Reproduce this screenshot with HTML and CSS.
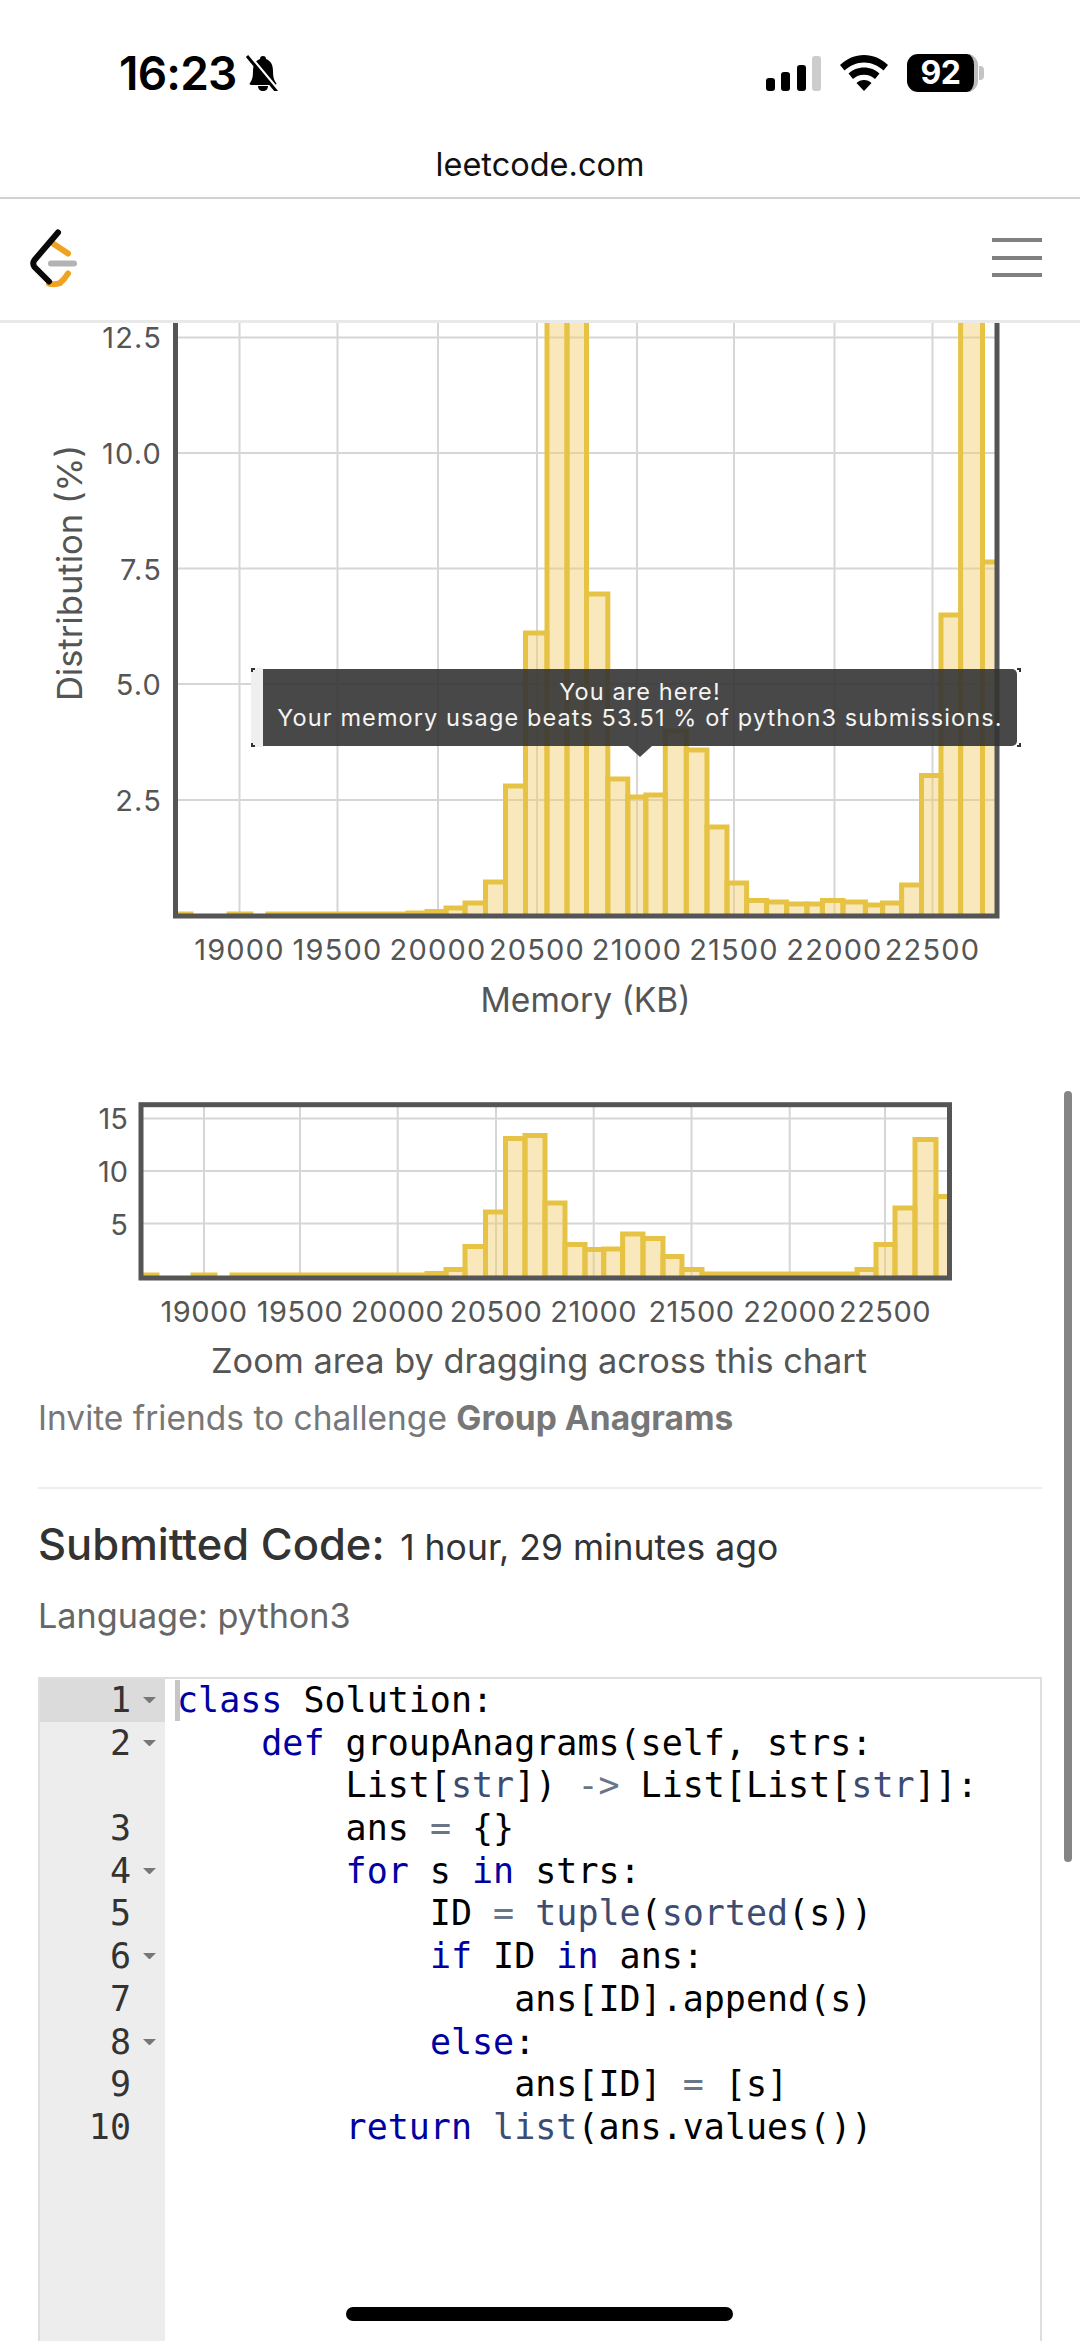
FILE: index.html
```html
<!DOCTYPE html>
<html lang="en">
<head>
<meta charset="utf-8">
<title>Group Anagrams submission</title>
<link rel="stylesheet" href="styles.css">
</head>
<body>
<div class="page">
  <header class="status">
    <div class="status-left">
      <span class="time">16:23</span>
      <svg class="bell" viewBox="0 0 36 36" width="36" height="36">
        <path class="solid" d="M18 1c2 0 3 1 3 3 5 2 7 6 7 12 0 6 1 9 3 12 1 1 0 2-1 2H6c-1 0-2-1-1-2 2-3 3-6 3-12 0-6 2-10 7-12 0-2 1-3 3-3z"/>
        <path class="solid" d="M13 31h10c0 3-2 5-5 5s-5-2-5-5z"/>
        <path class="slash-w" d="M4 0l30 36"/>
        <path class="slash" d="M2 1l30 36"/>
      </svg>
    </div>
    <div class="status-right">
      <div class="signal"><i class="b1"></i><i class="b2"></i><i class="b3"></i><i class="b4"></i></div>
      <svg class="wifi" viewBox="0 0 48 36" width="48" height="36">
        <path class="solid" d="M24 0c9 0 17 3.500 24 10l-4.500 5.500C38 10.500 31.500 7.500 24 7.500S10 10.500 4.500 15.500L0 10C7 3.500 15 0 24 0z"/>
        <path class="solid" d="M24 12.500c6 0 11.500 2.200 15.500 6l-4.500 5.500c-3-2.800-6.800-4.300-11-4.300s-8 1.500-11 4.300l-4.500-5.500c4-3.800 9.500-6 15.500-6z"/>
        <path class="solid" d="M24 25c3 0 5.500 1 7.500 3L24 36l-7.500-8c2-2 4.500-3 7.500-3z"/>
      </svg>
      <div class="battery"><span class="battery-num">92</span></div>
    </div>
  </header>
  <div class="urlbar">leetcode.com</div>
  <nav class="nav">
    <svg class="logo" viewBox="0 0 60 70" width="60" height="70">
      <path class="logo-o" d="M33 17.500l15 10"/>
      <path class="logo-o" d="M29 57.500Q35 59 40 57Q44 54 48 47.500"/>
      <path class="logo-k" d="M38 6.500L14.500 34Q12 37.500 14.500 41L29 55.500"/>
      <path class="logo-g" d="M31 37.500H54"/>
    </svg>
    <div class="burger"><i></i><i></i><i></i></div>
  </nav>
  <main class="content">
    <section class="charts">
      <svg class="chart-main" viewBox="0 323 1080 707" width="1080" height="707">
        <defs>
          <clipPath id="clip-main"><rect x="175" y="323" width="822" height="595"/></clipPath>
          <clipPath id="clip-mini"><rect x="141" y="1105" width="808" height="175"/></clipPath>
        </defs>
        <g class="grid">
          <path d="M178 337.500H995M178 453H995M178 568.500H995M178 684H995M178 800H995"/>
          <path d="M239.500 323V914M337.500 323V914M438 323V914M537 323V914M637 323V914M734 323V914M834.500 323V914M932.500 323V914"/>
        </g>
        <g class="bars" clip-path="url(#clip-main)">
          <rect x="178" y="914" width="13" height="4"/>
          <rect x="229" y="914" width="22" height="4"/>
          <rect x="268" y="914" width="140" height="4"/>
          <rect x="408" y="913" width="19" height="5"/>
          <rect x="427" y="911.500" width="19" height="6"/>
          <rect x="446" y="908" width="19" height="10"/>
          <rect x="465" y="903" width="20.500" height="15"/>
          <rect x="485.500" y="882" width="20" height="36"/>
          <rect x="505.500" y="786" width="20" height="132"/>
          <rect x="525.500" y="633" width="21.500" height="285"/>
          <rect x="547" y="310" width="20" height="608"/>
          <rect x="567" y="310" width="19.500" height="608"/>
          <rect x="586.500" y="594" width="21.300" height="324"/>
          <rect x="607.800" y="779" width="20" height="139"/>
          <rect x="627.800" y="797" width="18" height="121"/>
          <rect x="645.800" y="795" width="19.500" height="123"/>
          <rect x="665.300" y="731" width="21" height="187"/>
          <rect x="686.300" y="750" width="20.700" height="168"/>
          <rect x="707" y="827" width="20" height="91"/>
          <rect x="727" y="883" width="19.600" height="35"/>
          <rect x="746.600" y="900.500" width="20" height="17"/>
          <rect x="766.600" y="902" width="20" height="16"/>
          <rect x="786.600" y="904" width="20.300" height="14"/>
          <rect x="806.900" y="904" width="15.500" height="14"/>
          <rect x="822.400" y="900.500" width="20.600" height="17"/>
          <rect x="843" y="902" width="22.400" height="16"/>
          <rect x="865.400" y="905" width="17.200" height="13"/>
          <rect x="882.600" y="903" width="19" height="15"/>
          <rect x="901.600" y="885" width="19.900" height="33"/>
          <rect x="921.500" y="775.500" width="19.500" height="142"/>
          <rect x="941" y="615" width="19.600" height="303"/>
          <rect x="960.600" y="310" width="21.900" height="608"/>
          <rect x="982.500" y="562" width="20" height="356"/>
        </g>
        <path class="axis" d="M175.500 323V916H997V323"/>
        <g class="tick-y wide">
          <text x="162" y="340.500">12.5</text>
          <text x="162" y="456.500">10.0</text>
          <text x="162" y="572">7.5</text>
          <text x="162" y="687.500">5.0</text>
          <text x="162" y="803.500">2.5</text>
        </g>
        <g class="tick-x wide-x">
          <text x="239.500" y="952">19000</text>
          <text x="337.500" y="952">19500</text>
          <text x="438" y="952">20000</text>
          <text x="537" y="952">20500</text>
          <text x="637" y="952">21000</text>
          <text x="734" y="952">21500</text>
          <text x="834.500" y="952">22000</text>
          <text x="932.500" y="952">22500</text>
        </g>
        <text class="axis-title dist" transform="translate(73 573) rotate(-90)">Distribution (%)</text>
        <text class="axis-title" x="585.500" y="1003">Memory (KB)</text>
      </svg>
      <div class="tooltip-frame"><i class="c-tl"></i><i class="c-bl"></i><i class="c-tr"></i><i class="c-br"></i></div>
      <div class="tooltip">You are here!<br>Your memory usage beats 53.51 % of python3 submissions.</div>
      <svg class="chart-mini" viewBox="0 1030 1080 355" width="1080" height="355">
        <g class="grid">
          <path d="M141 1118.500H949M141 1171H949M141 1223.500H949"/>
          <path d="M204 1105V1278M300 1105V1278M397.700 1105V1278M496 1105V1278M593.700 1105V1278M691.500 1105V1278M789.700 1105V1278M885 1105V1278"/>
        </g>
        <g class="bars" clip-path="url(#clip-mini)">
          <rect x="143" y="1275" width="14" height="4"/>
          <rect x="193" y="1275" width="22" height="4"/>
          <rect x="232" y="1275" width="195" height="4"/>
          <rect x="427" y="1273.500" width="19" height="5"/>
          <rect x="446" y="1269.500" width="19" height="9"/>
          <rect x="465" y="1246.500" width="20.500" height="32"/>
          <rect x="485.500" y="1212" width="20" height="66"/>
          <rect x="505.500" y="1138.500" width="19.500" height="140"/>
          <rect x="525" y="1135.500" width="20" height="143"/>
          <rect x="545" y="1203" width="20" height="75"/>
          <rect x="565" y="1244.500" width="20" height="34"/>
          <rect x="585" y="1249.500" width="18.700" height="29"/>
          <rect x="603.700" y="1249" width="18.900" height="29"/>
          <rect x="622.600" y="1234" width="20.400" height="44"/>
          <rect x="643" y="1238.500" width="20" height="40"/>
          <rect x="663" y="1256.500" width="19" height="22"/>
          <rect x="682" y="1269.500" width="20" height="9"/>
          <rect x="702" y="1274" width="155" height="5"/>
          <rect x="857" y="1269.500" width="19" height="9"/>
          <rect x="876" y="1244.500" width="19" height="34"/>
          <rect x="895" y="1208" width="20" height="70"/>
          <rect x="915" y="1139.500" width="21" height="139"/>
          <rect x="936" y="1196.500" width="20" height="82"/>
        </g>
        <rect class="frame" x="141" y="1104.700" width="808.500" height="173.300"/>
        <g class="tick-y">
          <text x="128" y="1121">15</text>
          <text x="128" y="1174">10</text>
          <text x="128" y="1227">5</text>
        </g>
        <g class="tick-x">
          <text x="204" y="1314">19000</text>
          <text x="300" y="1314">19500</text>
          <text x="397.700" y="1314">20000</text>
          <text x="496" y="1314">20500</text>
          <text x="593.700" y="1314">21000</text>
          <text x="691.500" y="1314">21500</text>
          <text x="789.700" y="1314">22000</text>
          <text x="885" y="1314">22500</text>
        </g>
        <text class="axis-title zoom-note" x="539" y="1364">Zoom area by dragging across this chart</text>
      </svg>
    </section>
    <section class="details">
      <p class="invite">Invite friends to challenge <b>Group Anagrams</b></p>
      <hr class="rule">
      <h3 class="submitted">Submitted Code: <small>1 hour, 29 minutes ago</small></h3>
      <p class="language">Language: python3</p>
      <div class="editor">
        <div class="gutter">
          <div class="gl active">1<i class="fold"></i></div>
          <div class="gl">2<i class="fold"></i></div>
          <div class="gl"></div>
          <div class="gl">3<i class="nofold"></i></div>
          <div class="gl">4<i class="fold"></i></div>
          <div class="gl">5<i class="nofold"></i></div>
          <div class="gl">6<i class="fold"></i></div>
          <div class="gl">7<i class="nofold"></i></div>
          <div class="gl">8<i class="fold"></i></div>
          <div class="gl">9<i class="nofold"></i></div>
          <div class="gl">10<i class="nofold"></i></div>
        </div>
        <div class="code">
          <div class="cl cursor"><span class="kw">class</span> Solution:</div>
          <div class="cl">    <span class="kw">def</span> groupAnagrams(self, strs:</div>
          <div class="cl">        List[<span class="fn">str</span>]) <span class="op">-&gt;</span> List[List[<span class="fn">str</span>]]:</div>
          <div class="cl">        ans <span class="op">=</span> {}</div>
          <div class="cl">        <span class="kw">for</span> s <span class="kw">in</span> strs:</div>
          <div class="cl">            ID <span class="op">=</span> <span class="fn">tuple</span>(<span class="fn">sorted</span>(s))</div>
          <div class="cl">            <span class="kw">if</span> ID <span class="kw">in</span> ans:</div>
          <div class="cl">                ans[ID].append(s)</div>
          <div class="cl">            <span class="kw">else</span>:</div>
          <div class="cl">                ans[ID] <span class="op">=</span> [s]</div>
          <div class="cl">        <span class="kw">return</span> <span class="fn">list</span>(ans.values())</div>
        </div>
      </div>
    </section>
  </main>
  <div class="scrollbar"></div>
  <div class="home"></div>
</div>
</body>
</html>
```
FILE: styles.css
```css
* { box-sizing: border-box; }
html, body { margin: 0; padding: 0; background: #fff; }
.page {
  position: relative;
  width: 1080px;
  height: 2341px;
  overflow: hidden;
  background: #fff;
  font-family: Inter, "Liberation Sans", sans-serif;
}

/* status bar */
.status {
  height: 130px;
  display: flex;
  justify-content: space-between;
  align-items: flex-start;
  padding: 54px 102px 0 119px;
}
.status-left { display: flex; align-items: center; gap: 9px; height: 38px; }
.time { font-size: 46px; font-weight: 600; line-height: 38px; letter-spacing: -0.8px; color: #000; }
.bell { display: block; }
.solid { fill: #000; }
.slash { stroke: #000; stroke-width: 3; fill: none; }
.slash-w { stroke: #fff; stroke-width: 3; fill: none; }
.status-right { display: flex; align-items: flex-start; }
.signal { width: 55px; height: 36px; margin-top: 1px; display: flex; align-items: flex-end; justify-content: space-between; }
.signal i { display: block; width: 9px; border-radius: 3px; background: #000; }
.signal .b1 { height: 13px; }
.signal .b2 { height: 19px; }
.signal .b3 { height: 26px; }
.signal .b4 { height: 35px; background: #ccc; }
.wifi { display: block; margin-left: 19px; margin-top: 1px; }
.battery {
  position: relative;
  margin-left: 19px;
  width: 71px;
  height: 38px;
  border-radius: 11px;
  background: #000;
  border-right: 4px solid #bdbdbd;
  display: flex;
  align-items: center;
  justify-content: center;
}
.battery::after {
  content: "";
  position: absolute;
  right: -10px;
  top: 12px;
  width: 5px;
  height: 14px;
  border-radius: 0 4px 4px 0;
  background: #c4c4c4;
}
.battery-num { font-size: 32px; font-weight: 700; color: #fff; line-height: 38px; letter-spacing: -0.5px; }

/* url bar */
.urlbar {
  height: 69px;
  border-bottom: 2px solid #d2d2d2;
  text-align: center;
  font-size: 32.500px;
  line-height: 70px;
  color: #111;
}

/* nav */
.nav {
  height: 124px;
  border-bottom: 3px solid #e9e9e9;
  display: flex;
  justify-content: space-between;
  align-items: center;
  padding: 0 38px 4px 20px;
}
.logo { display: block; fill: none; margin-top: 6px; }
.logo-o, .logo-k, .logo-g { fill: none; stroke-linecap: round; stroke-linejoin: round; stroke-width: 6; }
.logo-o { stroke: #f0a321; }
.logo-k { stroke: #0a0a0a; }
.logo-g { stroke: #b3b3b3; }
.burger { width: 50px; display: flex; flex-direction: column; gap: 13.500px; }
.burger i { display: block; height: 4px; background: #808080; }

/* charts */
.charts { position: relative; }
.chart-main, .chart-mini { display: block; }
.grid path { stroke: #d6d6d6; stroke-width: 2; fill: none; }
.bars rect { fill: rgba(240, 205, 110, 0.46); stroke: #e6c345; stroke-width: 5; }
.axis { fill: none; stroke: #555; stroke-width: 5; }
.frame { fill: none; stroke: #555; stroke-width: 5; }
.tick-y text { font-size: 29px; fill: #555; text-anchor: end; dominant-baseline: middle; }
.tick-y.wide text { letter-spacing: 1.2px; }
.tick-x text { font-size: 29px; fill: #555; text-anchor: middle; dominant-baseline: middle; letter-spacing: 0.5px; }
.tick-x.wide-x text { letter-spacing: 1.2px; }
.axis-title { font-size: 33.600px; fill: #555; text-anchor: middle; dominant-baseline: middle; }
.axis-title.dist { font-size: 34.600px; }
.axis-title.zoom-note { font-size: 34.300px; }

.tooltip {
  position: absolute;
  left: 263px;
  top: 346px;
  width: 754px;
  height: 77px;
  padding-top: 10px;
  background: rgba(52, 52, 52, 0.9);
  border-radius: 0 5px 5px 0;
  color: #f4f4f4;
  font-size: 23.500px;
  line-height: 26px;
  text-align: center;
  letter-spacing: 1.1px;
}
.tooltip::after {
  content: "";
  position: absolute;
  left: 365px;
  top: 77px;
  border-left: 12px solid transparent;
  border-right: 12px solid transparent;
  border-top: 11px solid rgba(52, 52, 52, 0.9);
}
.tooltip-frame {
  position: absolute;
  left: 251px;
  top: 345px;
  width: 770px;
  height: 79px;
  background: linear-gradient(to right, #efefef 12px, transparent 12px);
}
.tooltip-frame i { position: absolute; width: 4px; height: 4px; border: 0 solid #333; }
.c-tl { left: 0; top: 0; border-width: 2px 0 0 2px !important; }
.c-bl { left: 0; bottom: 0; border-width: 0 0 2px 2px !important; }
.c-tr { right: 0; top: 0; border-width: 2px 2px 0 0 !important; }
.c-br { right: 0; bottom: 0; border-width: 0 2px 2px 0 !important; }

/* details */
.details { padding: 0 38px; }
.invite { margin: 13px 0 0; font-size: 33.500px; line-height: 40px; color: #777; }
.invite b { font-weight: 700; }
.rule { margin: 49px 0 0; height: 2px; border: 0; background: #eee; }
.submitted { margin: 30px 0 0; font-size: 43.500px; line-height: 50px; font-weight: 500; color: #333; }
.submitted small { font-size: 35.500px; font-weight: 400; margin-left: 4px; }
.language { margin: 23px 0 0; font-size: 34.200px; line-height: 40px; color: #666; }
.editor {
  margin-top: 41px;
  height: 720px;
  border: 2px solid #dedede;
  display: flex;
  font-family: "DejaVu Sans Mono", "Liberation Mono", monospace;
  font-size: 35px;
  color: #000;
}
.gutter { width: 125px; flex: none; background: #ededed; color: #333; }
.gl { height: 42.700px; line-height: 42.700px; display: flex; justify-content: flex-end; align-items: center; padding-right: 9px; }
.gl.active { background: #dbdbdb; }
.fold, .nofold { display: block; width: 13px; height: 0; margin-left: 12px; }
.fold { border-left: 6.500px solid transparent; border-right: 6.500px solid transparent; border-top: 6px solid #777; }
.code { padding-left: 12px; }
.cl { height: 42.700px; line-height: 42.700px; white-space: pre; }
.cursor { position: relative; }
.cursor::before { content: ""; position: absolute; left: -2px; top: 1px; width: 5px; height: 41px; background: #c6c6c6; }
.kw { color: #0000a2; }
.fn { color: #3c4c72; }
.op { color: #687687; }

/* overlays */
.scrollbar { position: absolute; left: 1064px; top: 1091px; width: 8px; height: 771px; border-radius: 4px; background: #858585; }
.home { position: absolute; left: 346px; top: 2307px; width: 387px; height: 14px; border-radius: 7px; background: #000; }
```
